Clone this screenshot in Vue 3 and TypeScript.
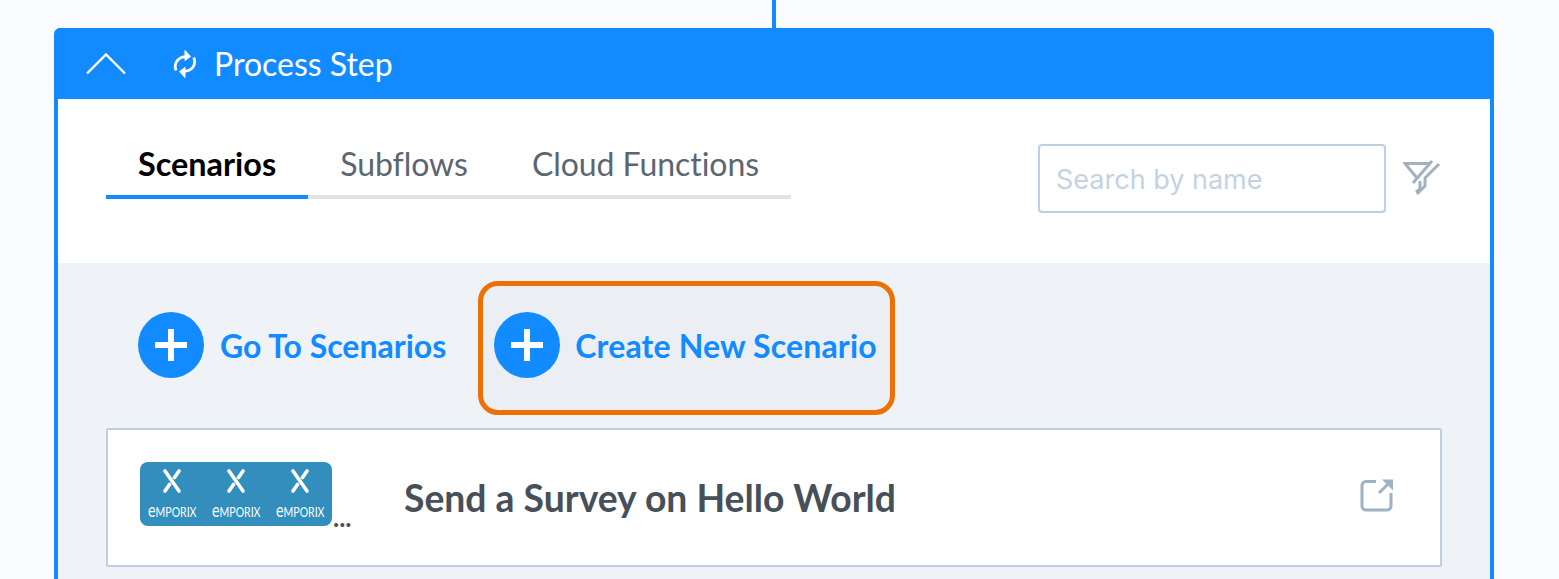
<script setup lang="ts">
const tabs: string[] = ['Scenarios', 'Subflows', 'Cloud Functions']
const logos: number[] = [0, 1, 2]
</script>

<template>
  <div class="page">
    <div class="connector"></div>
    <section class="card">
      <header class="head">
        <svg class="chev" width="42" height="24" viewBox="0 0 42 24" fill="none" stroke="#fff" stroke-width="2.4">
          <path d="M2 22.5 21 3.5 40 22.5" />
        </svg>
        <svg class="sync" width="26" height="30" viewBox="0 0 26 30" fill="none" stroke="#fff" stroke-width="2.800">
          <path d="M4 21.5C1.800 15.5 4.5 8.500 13.5 7.600" />
          <path d="M13 1.500 18.5 7.400 13 11.500Z" fill="#fff" stroke-width="1" />
          <path d="M21.800 8.500C24.200 14.500 21.500 21.500 12.500 22.400" />
          <path d="M13 28.500 7.500 22.600 13 18.500Z" fill="#fff" stroke-width="1" />
        </svg>
        <span class="head-title">Process Step</span>
      </header>
      <div class="body">
        <div class="toolbar">
          <nav class="tabs">
            <a v-for="(tab, i) in tabs" :key="tab" class="tab" :class="{ active: i === 0 }">{{ tab }}</a>
          </nav>
          <div class="tools">
            <input class="search" placeholder="Search by name" />
            <svg class="filter" width="38" height="38" viewBox="0 0 38 38" fill="none" stroke="#a0b1c1" stroke-width="3">
              <path d="M27 3.500H2L14 18" />
              <path d="M29 1 10 23" />
              <path d="M36 4 22 18V26L14 34" />
              <path d="M17 21V29L13 32" />
            </svg>
          </div>
        </div>
        <div class="panel">
          <div class="actions">
            <a class="action">
              <span class="plus"></span>
              <span class="label">Go To Scenarios</span>
            </a>
            <a class="action focused">
              <span class="plus"></span>
              <span class="label">Create New Scenario</span>
            </a>
          </div>
          <article class="row">
            <div class="thumb">
              <div class="logos">
                <div v-for="n in logos" :key="n" class="logo">
                  <svg width="20" height="24" viewBox="0 0 20 24" fill="none" stroke="#fff" stroke-width="3.600" stroke-linecap="round">
                    <path d="M3 2 17 22" />
                    <path d="M17 2 12.500 8.500" />
                    <path d="M7.500 15.500 3 22" />
                  </svg>
                  <span class="logo-text"><span class="logo-e">e</span>MPORIX</span>
                </div>
              </div>
              <span class="dots">...</span>
            </div>
            <h3 class="row-title">Send a Survey on Hello World</h3>
            <svg class="open" width="34" height="34" viewBox="0 0 34 34" fill="none" stroke="#a0b1c1" stroke-width="3">
              <path d="M16 3.500H6A4 4 0 0 0 2 7.500V28A4 4 0 0 0 6 32H27A4 4 0 0 0 31 28V15" />
              <path d="M19 15 30 4" />
              <path d="M22 1.500H33V12.500Z" fill="#a0b1c1" stroke="none" />
            </svg>
          </article>
        </div>
      </div>
    </section>
  </div>
</template>

<style scoped>
.page {
  box-sizing: border-box;
  height: 579px;
  overflow: hidden;
  background: #fafbfd;
  padding-left: 54px;
  font-family: Lato, sans-serif;
}
.connector {
  width: 4px;
  height: 28px;
  margin-left: 718px;
  background: #118bff;
}
.card {
  box-sizing: border-box;
  width: 1440px;
  height: 600px;
  border: 4px solid #118bff;
  border-top: 0;
  border-radius: 6px 6px 0 0;
  background: #fff;
}
.head {
  display: flex;
  align-items: center;
  height: 71px;
  background: #118bff;
  color: #fff;
  padding-left: 27px;
}
.chev {
  margin-right: 45px;
  margin-top: -2px;
}
.sync {
  margin-right: 16px;
}
.head-title {
  font-size: 32px;
  line-height: 1;
}
.toolbar {
  display: flex;
  justify-content: space-between;
  height: 164px;
  padding: 0 48px;
}
.tabs {
  display: flex;
  align-self: flex-start;
  margin-top: 40px;
  border-bottom: 4px solid #e0e2e7;
}
.tab {
  display: block;
  height: 56px;
  margin-bottom: -4px;
  padding: 0 32px;
  border-bottom: 4px solid transparent;
  font-size: 32px;
  line-height: 50px;
  letter-spacing: -0.05px;
  color: #5b6670;
}
.tab.active {
  border-bottom-color: #118bff;
  color: #000;
  font-size: 32.4px;
  font-weight: 700;
  letter-spacing: 0;
}
.tools {
  display: flex;
  align-items: center;
  align-self: flex-start;
  margin-top: 45px;
  margin-right: 1px;
}
.search {
  box-sizing: border-box;
  width: 348px;
  height: 69px;
  padding: 2px 16px 0;
  border: 2px solid #bfcfe0;
  border-radius: 4px;
  outline: none;
  background: #fff;
  font-family: Inter, sans-serif;
  font-size: 27px;
  color: #333;
}
.search::placeholder {
  color: #c3d3e3;
  opacity: 1;
}
.filter {
  margin-left: 17px;
}
.panel {
  height: 400px;
  padding: 18px 48px 0;
  background: #eff2f7;
}
.actions {
  display: flex;
  gap: 32px;
  padding-left: 32px;
  height: 147px;
}
.action {
  box-sizing: border-box;
  display: flex;
  align-items: center;
  gap: 16px;
  height: 134px;
  padding-bottom: 6px;
  color: #118bff;
  font-size: 32px;
  font-weight: 700;
}
.action.focused {
  padding: 0 13px 6px 11px;
  border: 5px solid #ec7006;
  border-radius: 20px;
  background: #ebeef3;
  gap: 15px;
  letter-spacing: 0.15px;
}
.plus {
  position: relative;
  flex: none;
  width: 66px;
  height: 66px;
  border-radius: 50%;
  background: #118bff;
}
.plus::before,
.plus::after {
  content: '';
  position: absolute;
  background: #fff;
}
.plus::before {
  left: 17px;
  right: 17px;
  top: 30px;
  height: 6px;
}
.plus::after {
  top: 17px;
  bottom: 17px;
  left: 30px;
  width: 6px;
}
.label {
  white-space: nowrap;
}
.row {
  box-sizing: border-box;
  display: flex;
  align-items: center;
  width: 1336px;
  height: 139px;
  padding: 0 46px 0 32px;
  border: 2px solid #bfcfe0;
  border-radius: 2px;
  background: #fff;
}
.thumb {
  display: flex;
  align-items: flex-end;
  width: 264px;
  flex: none;
  margin-top: -7px;
}
.logos {
  display: flex;
  justify-content: space-between;
  box-sizing: border-box;
  width: 192px;
  height: 64px;
  padding: 7px 7px 0;
  border-radius: 8px;
  background: #338dbd;
}
.logo {
  display: flex;
  flex-direction: column;
  align-items: center;
  width: 50px;
}
.logo-text {
  display: inline-block;
  margin-top: 10px;
  font-family: Lato, sans-serif;
  font-size: 14px;
  line-height: 14px;
  color: #fff;
  white-space: nowrap;
  transform: scaleX(0.75);
}
.logo-e {
  font-size: 19px;
}
.dots {
  margin-left: 1px;
  font-size: 26px;
  font-weight: 700;
  line-height: 10px;
  color: #474f58;
  height: 14px;
}
.row-title {
  flex: 1;
  margin: 0;
  font-size: 37.300px;
  font-weight: 700;
  color: #474f58;
}
.open {
  margin-bottom: 5px;
}
</style>
